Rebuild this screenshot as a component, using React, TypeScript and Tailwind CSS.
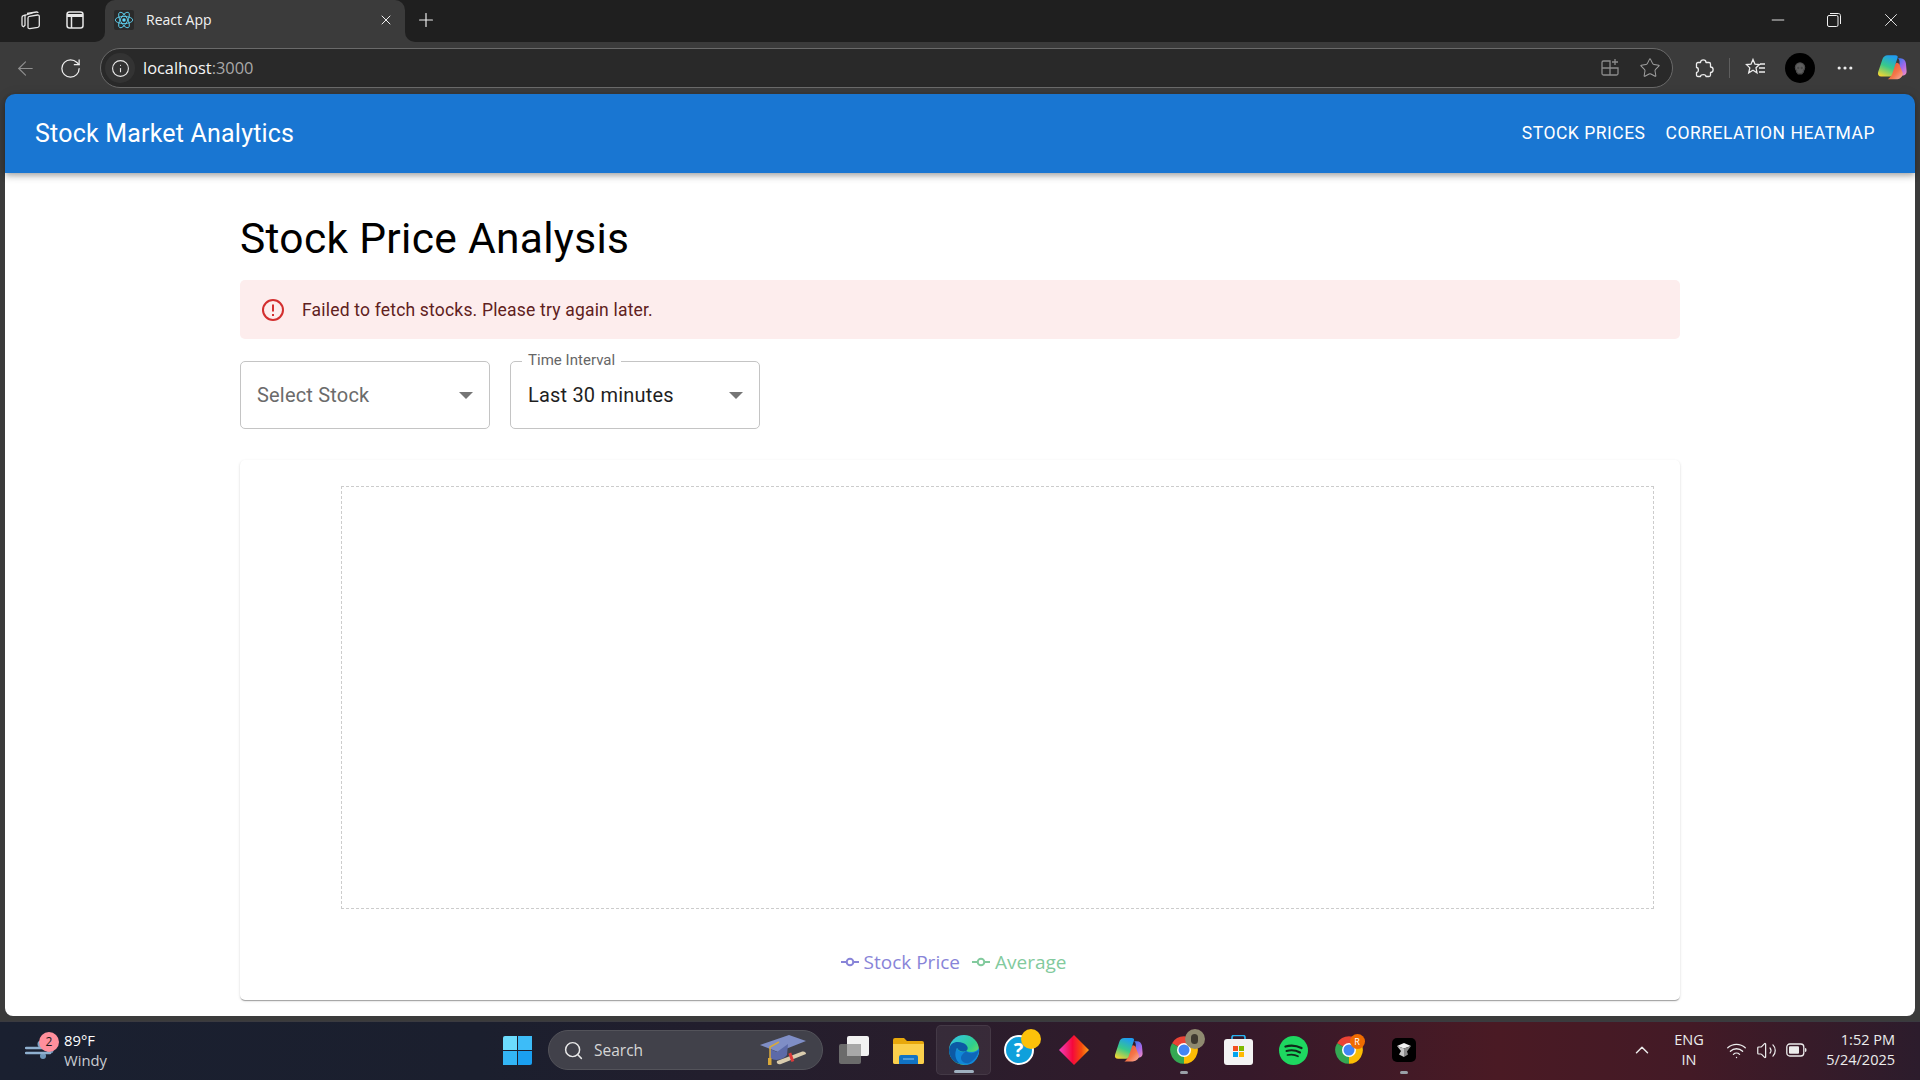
import React from 'react';
import { ArrowLeft, RotateCw, Info, Plus, X, Minus, Star, MoreHorizontal, Search, ChevronUp, Wifi, Volume2, Skull } from 'lucide-react';

const Chrome: React.FC = () => (
  <svg width="30" height="30" viewBox="0 0 24 24">
    <path d="M12 12 L2.47 6.5 A11 11 0 0 1 21.53 6.5 Z" fill="#ea4335" />
    <path d="M12 12 L21.53 6.5 A11 11 0 0 1 12 23 Z" fill="#fbbc04" />
    <path d="M12 12 L12 23 A11 11 0 0 1 2.47 6.5 Z" fill="#34a853" />
    <circle cx="12" cy="12" r="5.6" fill="#fff" />
    <circle cx="12" cy="12" r="4.4" fill="#4285f4" />
  </svg>
);

const Copilot: React.FC<{ size: number }> = ({ size }) => (
  <svg width={size} height={size} viewBox="0 0 28 28">
    <defs>
      <linearGradient id={`cp-a-${size}`} x1="0.6" y1="0" x2="0.2" y2="1">
        <stop offset="0" stopColor="#1f9cf0" />
        <stop offset="0.5" stopColor="#38c98a" />
        <stop offset="1" stopColor="#f5d531" />
      </linearGradient>
      <linearGradient id={`cp-b-${size}`} x1="0.2" y1="0" x2="0.8" y2="1">
        <stop offset="0" stopColor="#3a78f0" />
        <stop offset="0.55" stopColor="#a868e8" />
        <stop offset="1" stopColor="#e98ac8" />
      </linearGradient>
      <linearGradient id={`cp-c-${size}`} x1="0" y1="0" x2="1" y2="1">
        <stop offset="0" stopColor="#e8452e" />
        <stop offset="0.6" stopColor="#f5784a" />
        <stop offset="1" stopColor="#f8b0a8" />
      </linearGradient>
    </defs>
    <path d="M19 5h3c3 0 4.500 2 5 4.500l.6 7c.2 2.500-1 4.500-4 4.500h-5l2-8c.7-2.500 1-8-1.600-8z" fill={`url(#cp-b-${size})`} />
    <path d="M18 9c2 0 3.500 1.500 3.500 3.500l2.500 6c.5 2-.5 3.500-2.500 5-1 .6-2 1-3.500 1h-8c2-1 3-3 3.500-5L16 11z" fill={`url(#cp-c-${size})`} />
    <path d="M10 2h7c2 0 2.700 1 2.200 2.500L14 20c-.6 1.500-1.500 2-3 2H4c-2.500 0-3.500-1.600-3-4L5 6C5.600 3.500 7.500 2 10 2z" fill={`url(#cp-a-${size})`} />
  </svg>
);

const ReactLogo: React.FC = () => (
  <svg width="20" height="20" viewBox="-12 -12 24 24" fill="none" stroke="#61dafb" strokeWidth="1">
    <circle r="2.100" fill="#61dafb" stroke="none" />
    <ellipse rx="10.500" ry="4.300" />
    <ellipse rx="10.500" ry="4.300" transform="rotate(60)" />
    <ellipse rx="10.500" ry="4.300" transform="rotate(120)" />
  </svg>
);

const BrowserChrome: React.FC = () => (
  <div className="font-['Open_Sans',sans-serif] text-white">
    {/* Tab strip */}
    <div className="h-[42px] bg-[#3b3b3b] flex">
      <div className="w-[105px] h-[42px] bg-[#1f1f1f] rounded-br-[10px] flex items-center pl-[20px] pb-[3px] gap-[24px] shrink-0">
        <svg width="22" height="22" viewBox="0 0 22 22" fill="none" stroke="#e6e6e6" strokeWidth="1.300">
          <path d="M7 4.500l9.500-1.500c1-.1 1.500.3 1.600 1" />
          <path d="M4.500 6.500l8-2.500" />
          <path d="M2 8.500c0-1 .5-1.600 1.300-1.800l1.700-.5v10l-1.500 1.500C2.500 17.500 2 17 2 16z" />
          <path d="M8 9c0-1 .6-1.500 1.500-1.600l8-1.400c1-.1 1.800.5 1.800 1.500v9c0 1-.5 1.600-1.500 1.800l-8 1.400C8.800 19.800 8 19.200 8 18.200z" />
        </svg>
        <svg width="18" height="18" viewBox="0 0 18 18" fill="none" stroke="#e6e6e6" strokeWidth="1.500">
          <rect x="1" y="1" width="16" height="16" rx="2.500" />
          <path d="M1 4.500h16" strokeWidth="3" />
          <path d="M5.500 5v12" />
        </svg>
      </div>
      <div className="w-[300px] h-[42px] bg-[#1f1f1f] shrink-0">
        <div className="h-full bg-[#3b3b3b] rounded-t-[10px] flex items-center pl-[9px] pr-[11px] pb-[3px]">
          <div className="w-[20px] h-[20px] bg-[#2a2a2a] rounded-[2px] flex items-center justify-center">
            <ReactLogo />
          </div>
          <span className="ml-[12px] text-[14px] text-[#f2f2f2] flex-1">React App</span>
          <X size={16} strokeWidth={1.500} className="text-[#f0f0f0]" />
        </div>
      </div>
      <div className="flex-1 h-[42px] bg-[#1f1f1f] rounded-bl-[10px] flex items-center pb-[3px]">
        <div className="w-[42px] flex items-center justify-center">
          <Plus size={22} strokeWidth={1.300} className="text-[#ececec]" />
        </div>
        <div className="flex-1" />
        <div className="flex items-center pr-[18px] gap-[39px] text-[#f0f0f0]">
          <Minus size={20} strokeWidth={1.100} />
          <svg width="14" height="14" viewBox="0 0 14 14" fill="none" stroke="currentColor" strokeWidth="1">
            <rect x="0.500" y="2.500" width="10.500" height="11" rx="1.500" />
            <path d="M3 .5h8.500c1 0 2 1 2 2V11" />
          </svg>
          <X size={22} strokeWidth={1} />
        </div>
      </div>
    </div>
    {/* Address bar */}
    <div className="h-[52px] bg-[#3b3b3b] flex items-center">
      <div className="w-[100px] flex items-center pl-[14px] gap-[22px] shrink-0">
        <ArrowLeft size={23} strokeWidth={1.200} className="text-[#8f8f8f]" />
        <RotateCw size={23} strokeWidth={1.300} className="text-[#efefef]" />
      </div>
      <div className="w-[1573px] h-[40px] rounded-full bg-[#292929] border border-[#6a6a6a] flex items-center shrink-0">
        <div className="w-[30px] h-[30px] ml-[4px] rounded-full bg-[#333333] flex items-center justify-center">
          <Info size={19} strokeWidth={1.400} className="text-[#e8e8e8]" />
        </div>
        <span className="ml-[8px] text-[16.400px] text-[#f5f5f5]">
          localhost<span className="text-[#a8a8a8]">:3000</span>
        </span>
        <div className="flex-1" />
        <svg width="20" height="20" viewBox="0 0 20 20" fill="none" stroke="#8c8c8c" strokeWidth="1.300">
          <path d="M10 3H3.500A1.500 1.500 0 0 0 2 4.500V10h8zM2 10v5.500A1.500 1.500 0 0 0 3.500 17H10v-7zM10 10v7h6.500a1.500 1.500 0 0 0 1.500-1.500V10z" />
          <path d="M15 1v6M12 4h6" />
        </svg>
        <Star size={22} strokeWidth={1.100} className="text-[#a0a0a0] ml-[19px] mr-[11px]" />
      </div>
      <div className="flex items-center flex-1 pl-[20px]">
        <svg width="21" height="21" viewBox="0 0 21 21" fill="none" stroke="#ececec" strokeWidth="1.300" strokeLinejoin="round">
          <path d="M7.500 4.500C7.500 1 13 1 13 4.500h3c1 0 1.500.5 1.500 1.500v3c3.500 0 3.500 5.500 0 5.500V17c0 1-.5 1.500-1.500 1.500h-3c0-2.500-5.500-2.500-5.500 0H5c-1 0-1.500-.5-1.500-1.500v-2.500c2.500 0 2.500-5 0-5V6c0-1 .5-1.500 1.500-1.500z" />
        </svg>
        <div className="w-px h-[20px] bg-[#5e5e5e] ml-[15px]" />
        <svg className="ml-[14px]" width="22" height="22" viewBox="0 0 22 22" fill="none" stroke="#ececec" strokeWidth="1.300">
          <path d="M9 2.500l2 4.700 4.500.4-3.500 3.200 1 5-4-2.500-4.300 2.600 1.100-5L2.500 7.600l4.500-.4z" />
          <path d="M16 7h5M15 11h6M15 15h6" />
        </svg>
        <div className="w-[30px] h-[30px] rounded-full bg-black ml-[19px] flex items-center justify-center">
          <Skull size={14} className="text-[#4a4a4a]" fill="#5f5f5f" />
        </div>
        <MoreHorizontal size={20} strokeWidth={1.800} className="text-[#ececec] ml-[20px]" />
        <div className="ml-[22px]">
          <Copilot size={30} />
        </div>
      </div>
    </div>
  </div>
);

const AppBar: React.FC = () => (
  <div className="h-[79px] bg-[#1976d2] rounded-t-[10px] flex items-center pl-[30px] pr-[40px] text-white font-['Roboto',sans-serif] shadow-[0_2px_5px_-1px_rgba(0,0,0,0.2),0_4px_6px_0_rgba(0,0,0,0.14),0_1px_12px_0_rgba(0,0,0,0.12)] relative">
    <div className="text-[25px] font-[450] tracking-[0.2px] flex-1">Stock Market Analytics</div>
    <div className="flex items-center gap-[20px] text-[17.500px] font-[450] tracking-[0.5px] pb-[1px]">
      <span>STOCK PRICES</span>
      <span>CORRELATION HEATMAP</span>
    </div>
  </div>
);

const SelectBox: React.FC<{ label?: string; value: string; muted?: boolean }> = ({ label, value, muted }) => (
  <div className="relative w-[250px] h-[68px] border border-[#c4c4c4] rounded-[5px] flex items-center pl-[17px] pr-[14px]">
    {label && (
      <span className="absolute -top-[11px] left-[11px] px-[6px] bg-white text-[15px] leading-[18px] tracking-[0.03px] text-[#666666]">{label}</span>
    )}
    <span className={muted ? 'text-[20px] tracking-[0.19px] text-[#6b6b6b] flex-1 -ml-[1px]' : 'text-[20px] tracking-[0.19px] text-[#1f1f1f] flex-1'}>{value}</span>
    <svg width="14" height="7" viewBox="0 0 14 7" className="mr-[2px]">
      <path d="M0 0h14L7 7z" fill="#757575" />
    </svg>
  </div>
);

const LegendMark: React.FC<{ color: string }> = ({ color }) => (
  <svg width="18" height="10" viewBox="0 0 18 10" fill="none" stroke={color} strokeWidth="2">
    <path d="M0 5h5M13 5h5" />
    <circle cx="9" cy="5" r="3.300" />
  </svg>
);

const Content: React.FC = () => (
  <div className="flex-1 bg-white px-[235px] pt-[41px] font-['Roboto',sans-serif] rounded-b-[8px]">
    <h1 className="text-[42.500px] leading-[50px] tracking-[0.31px] text-black">Stock Price Analysis</h1>

    <div className="mt-[16px] h-[59px] bg-[#fdeded] rounded-[5px] flex items-center pl-[21px] text-[#5f2120]">
      <svg width="24" height="24" viewBox="0 0 24 24" fill="none" stroke="#d32f2f" strokeWidth="2">
        <circle cx="12" cy="12" r="10" />
        <path d="M12 6.500v7M12 16v2" />
      </svg>
      <span className="ml-[17px] pt-[2px] text-[17.500px] tracking-[0.19px]">Failed to fetch stocks. Please try again later.</span>
    </div>

    <div className="mt-[22px] flex gap-[20px]">
      <SelectBox value="Select Stock" muted />
      <SelectBox label="Time Interval" value="Last 30 minutes" />
    </div>

    <div className="mt-[31px] h-[540px] rounded-[5px] bg-white shadow-[0_2px_1px_-1px_rgba(0,0,0,0.2),0_1px_1px_0_rgba(0,0,0,0.14),0_1px_3px_0_rgba(0,0,0,0.12)] pt-[26px] pl-[101px] pr-[26px]">
      <div className="h-[423px] border border-dashed border-[#cccccc]" />
      <div className="mt-[39px] flex items-center justify-center gap-[12px] text-[19px] font-['Open_Sans',sans-serif] pr-[88px]">
        <span className="flex items-center gap-[5px] text-[#8884d8]"><LegendMark color="#8884d8" />Stock Price</span>
        <span className="flex items-center gap-[5px] text-[#82ca9d]"><LegendMark color="#82ca9d" />Average</span>
      </div>
    </div>
  </div>
);

const Cell: React.FC<{ children: React.ReactNode; active?: boolean; dot?: boolean }> = ({ children, active, dot }) => (
  <div className={active ? 'relative w-[55px] h-[50px] rounded-[5px] bg-[#ffffff10] border border-[#ffffff12] flex items-center justify-center' : 'relative w-[55px] h-[50px] flex items-center justify-center'}>
    {children}
    {dot && <span className="absolute bottom-[1px] left-1/2 -translate-x-1/2 w-[8px] h-[3px] rounded-full bg-[#9aa0a8]" />}
    {active && <span className="absolute bottom-[1px] left-1/2 -translate-x-1/2 w-[20px] h-[3px] rounded-full bg-[#9fb0c0]" />}
  </div>
);

const Taskbar: React.FC = () => (
  <div className="h-[59px] pb-[2px] flex items-center font-['Open_Sans',sans-serif] text-white bg-[linear-gradient(90deg,#1a2030_0%,#1b1f2e_25%,#2a1d2c_50%,#36192a_65%,#4a1a24_78%,#431a26_88%,#2c1c2c_100%)] border-t border-[#3a3a40]">
    {/* Weather */}
    <div className="w-[490px] flex items-center pl-[25px] shrink-0">
      <div className="relative w-[30px] h-[30px] flex items-center">
        <svg width="30" height="20" viewBox="0 0 30 20" fill="none" stroke="#8fb0cf" strokeWidth="2.400" strokeLinecap="round">
          <circle cx="16" cy="4" r="3.500" fill="#7fa5c6" stroke="none" />
          <circle cx="25" cy="10" r="3.500" fill="#6f97ba" stroke="none" />
          <circle cx="18" cy="16" r="3" fill="#6f97ba" stroke="none" />
          <path d="M1 8h22M1 13h24" />
        </svg>
        <span className="absolute -top-[3px] left-[14px] w-[20px] h-[20px] rounded-full bg-[#ff8f9c] text-[#1a1a1a] text-[12px] flex items-center justify-center">2</span>
      </div>
      <div className="ml-[9px] text-[14.800px] leading-[20px]">
        <div>89°F</div>
        <div className="text-[#c9ccd2]">Windy</div>
      </div>
    </div>

    {/* Pinned */}
    <div className="flex items-center">
      <div className="w-[58px] flex justify-center pr-[4px]">
        <div className="grid grid-cols-2 gap-[1px] w-[29px] h-[29px]">
          <span className="bg-[#6cdcfd] rounded-tl-[2px]" />
          <span className="bg-[#3dbcf8]" />
          <span className="bg-[#33b5f5]" />
          <span className="bg-[#1a9ff0] rounded-br-[2px]" />
        </div>
      </div>
      <div className="w-[275px] h-[40px] rounded-full bg-[#41414a] border border-[#53535a] flex items-center pl-[14px] mr-[3px]">
        <Search size={21} strokeWidth={1.700} className="text-[#e8e8e8]" />
        <span className="ml-[10px] pt-[1px] text-[15.500px] text-[#d6d6d6] flex-1">Search</span>
        <svg width="48" height="32" viewBox="0 0 48 32" className="mr-[15px]">
          <path d="M1 11L30 1l17 6-28 11z" fill="#7f8ec6" />
          <path d="M11 15v9c6 4 14 1 17-3l1-11-11 8z" fill="#5c6aa8" />
          <path d="M20 8L11 13v12" stroke="#d9a93a" strokeWidth="1.500" fill="none" />
          <rect x="9" y="24" width="3.500" height="7" fill="#d9a93a" />
          <path d="M18 27l24-9c3-1 5 0 5 2l-25 10c-3 1-5-1-4-3z" fill="#d9ccae" />
          <rect x="31" y="19" width="3" height="9" fill="#dd3a3a" transform="rotate(-20 32 24)" />
        </svg>
      </div>
      <Cell>
        <svg width="30" height="28" viewBox="0 0 30 28">
          <rect x="0" y="8" width="22" height="20" rx="2" fill="#6b6b6b" />
          <rect x="8" y="0" width="22" height="20" rx="2" fill="#f2f2f2" />
          <rect x="8" y="8" width="14" height="12" fill="#a8a8a8" />
        </svg>
      </Cell>
      <Cell>
        <svg width="31" height="27" viewBox="0 0 31 27">
          <path d="M0 3a2 2 0 0 1 2-2h9l3 3h15a2 2 0 0 1 2 2v19a2 2 0 0 1-2 2H2a2 2 0 0 1-2-2z" fill="#e8a80c" />
          <path d="M0 7h31v18a2 2 0 0 1-2 2H2a2 2 0 0 1-2-2z" fill="#fbd04d" />
          <path d="M6 20a2 2 0 0 1 2-2h15a2 2 0 0 1 2 2v7H6z" fill="#1173c4" />
          <path d="M10 22h11" stroke="#8cc6ef" strokeWidth="1" />
        </svg>
      </Cell>
      <Cell active>
        <svg width="32" height="32" viewBox="0 0 32 32">
          <defs>
            <linearGradient id="edge-a" x1="0" y1="0" x2="1" y2="1">
              <stop offset="0" stopColor="#35c1f1" />
              <stop offset="0.55" stopColor="#2fd08c" />
              <stop offset="1" stopColor="#9de84a" />
            </linearGradient>
          </defs>
          <circle cx="16" cy="16" r="15" fill="url(#edge-a)" />
          <path d="M1 16C2 7 10 7 15 9c5 2 6 6 3 8-4 2-8-1-9-3-2 5-1 12 5 16C7 30 1 24 1 16z" fill="#0c59a4" />
          <path d="M18 17c5 2 11 1 13-3 1 6-2 11-5 14-5 4-11 3-14 2-5-4-6-11-3-16 1 3 5 5 9 3z" fill="#1187d8" />
          <path d="M18 17c3 3 8 3 13-1-1 5-5 11-10 13-5 1-8-2-8-5 0-3 3-5 5-7z" fill="#0f66b8" />
        </svg>
      </Cell>
      <Cell>
        <div className="relative">
          <div className="w-[30px] h-[30px] rounded-full bg-[#0ea0dc] border-[2px] border-white flex items-center justify-center text-[20px] font-bold leading-none">?</div>
          <span className="absolute -top-[6px] -right-[7px] w-[20px] h-[20px] rounded-full bg-[#fcc10a]" />
        </div>
      </Cell>
      <Cell>
        <svg width="30" height="30" viewBox="0 0 30 30">
          <defs>
            <linearGradient id="dia" x1="0" y1="0" x2="1" y2="0">
              <stop offset="0" stopColor="#f23fc0" />
              <stop offset="0.45" stopColor="#f5093c" />
              <stop offset="0.75" stopColor="#f54a0c" />
              <stop offset="1" stopColor="#f9a01e" />
            </linearGradient>
          </defs>
          <path d="M15 0l15 15-15 15L0 15z" fill="url(#dia)" />
        </svg>
      </Cell>
      <Cell><Copilot size={29} /></Cell>
      <Cell dot>
        <div className="relative">
          <Chrome />
          <span className="absolute -top-[6px] -right-[6px] w-[20px] h-[20px] rounded-full bg-[#8f8a70] flex items-center justify-center">
            <span className="w-[7px] h-[10px] rounded-full bg-[#3f3a30]" />
          </span>
        </div>
      </Cell>
      <Cell>
        <svg width="29" height="30" viewBox="0 0 29 30">
          <path d="M8 5V2.500C8 1 9 .5 10 .5h9c1 0 2 .5 2 2V5" fill="none" stroke="#2ab3f0" strokeWidth="1.700" />
          <rect x="0" y="4" width="29" height="26" rx="3" fill="#f3f3f3" />
          <rect x="9" y="11" width="5" height="5" fill="#f25022" />
          <rect x="15" y="11" width="5" height="5" fill="#7fba00" />
          <rect x="9" y="17" width="5" height="5" fill="#00a4ef" />
          <rect x="15" y="17" width="5" height="5" fill="#ffb900" />
        </svg>
      </Cell>
      <Cell>
        <svg width="29" height="29" viewBox="0 0 29 29" fill="none" stroke="#10291a" strokeLinecap="round">
          <circle cx="14.500" cy="14.500" r="14.500" fill="#1ed760" stroke="none" />
          <path d="M6.500 10.500c5-1.500 11-1 16 1.500" strokeWidth="2.300" />
          <path d="M7.500 15c4.500-1.200 9.500-.7 13.500 1.500" strokeWidth="2" />
          <path d="M8.500 19c3.500-.8 7.500-.5 10.500 1.300" strokeWidth="1.700" />
        </svg>
      </Cell>
      <Cell>
        <div className="relative">
          <Chrome />
          <span className="absolute -top-[1px] -right-[1px] w-[15px] h-[15px] rounded-full bg-[#ef6c00] text-[9px] flex items-center justify-center">R</span>
        </div>
      </Cell>
      <Cell dot>
        <div className="w-[24px] h-[24px] rounded-[5px] bg-black flex items-center justify-center">
          <svg width="16" height="16" viewBox="0 0 16 16">
            <path d="M1 4l7-3 7 3-7 2.500z" fill="#f0f0f0" />
            <path d="M1 4l7 2.500V15L3 12.500 5 9z" fill="#c4c4c4" />
            <path d="M15 4l-7 2.500V15l4-2.500-1-3z" fill="#8a8a8a" />
          </svg>
        </div>
      </Cell>
    </div>

    <div className="flex-1" />

    {/* Tray */}
    <div className="flex items-center pr-[25px] text-[14.500px] text-[#ececec]">
      <ChevronUp size={22} strokeWidth={1.600} className="-ml-[1px]" />
      <div className="ml-[20px] w-[32px] flex flex-col items-center leading-[20px]">
        <div>ENG</div>
        <div>IN</div>
      </div>
      <Wifi size={21} strokeWidth={1.500} className="ml-[21px]" />
      <Volume2 size={21} strokeWidth={1.400} className="ml-[9px]" />
      <svg className="ml-[9px]" width="21" height="14" viewBox="0 0 21 14" fill="none">
        <rect x="0.800" y="1" width="17" height="12" rx="3" stroke="#ececec" strokeWidth="1.300" />
        <rect x="3" y="3.200" width="10" height="7.600" rx="1" fill="#ececec" />
        <path d="M19 5v4c1.200 0 1.500-.8 1.500-2s-.3-2-1.500-2z" fill="#ececec" />
      </svg>
      <div className="ml-[18px] text-right leading-[20px] w-[70px] flex flex-col items-end whitespace-nowrap">
        <div>1:52 PM</div>
        <div>5/24/2025</div>
      </div>
    </div>
  </div>
);

export default function App() {
  return (
    <div className="w-[1920px] h-[1080px] flex flex-col overflow-hidden bg-[#3b3b3b]">
      <BrowserChrome />
      <div className="h-[927px] flex flex-col px-[5px] pb-[5px]">
        <AppBar />
        <Content />
      </div>
      <Taskbar />
    </div>
  );
}
